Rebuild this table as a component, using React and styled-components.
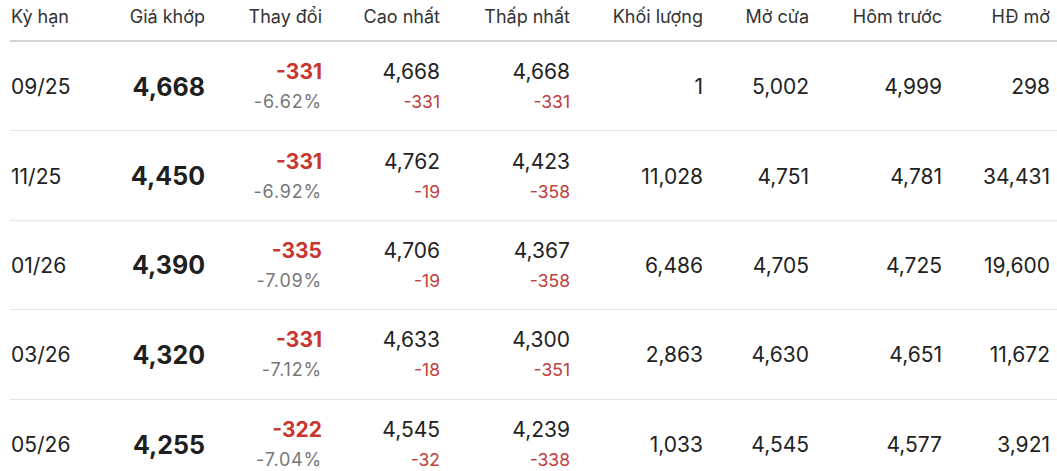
import { default as styled, createGlobalStyle } from "styled-components";

const rows = [
  { term: "09/25", price: "4,668", chg: "-331", pct: "-6.62%", high: "4,668", highChg: "-331", low: "4,668", lowChg: "-331", vol: "1", open: "5,002", prev: "4,999", oi: "298" },
  { term: "11/25", price: "4,450", chg: "-331", pct: "-6.92%", high: "4,762", highChg: "-19", low: "4,423", lowChg: "-358", vol: "11,028", open: "4,751", prev: "4,781", oi: "34,431" },
  { term: "01/26", price: "4,390", chg: "-335", pct: "-7.09%", high: "4,706", highChg: "-19", low: "4,367", lowChg: "-358", vol: "6,486", open: "4,705", prev: "4,725", oi: "19,600" },
  { term: "03/26", price: "4,320", chg: "-331", pct: "-7.12%", high: "4,633", highChg: "-18", low: "4,300", lowChg: "-351", vol: "2,863", open: "4,630", prev: "4,651", oi: "11,672" },
  { term: "05/26", price: "4,255", chg: "-322", pct: "-7.04%", high: "4,545", highChg: "-32", low: "4,239", lowChg: "-338", vol: "1,033", open: "4,545", prev: "4,577", oi: "3,921" },
];

const headers = ["Kỳ hạn", "Giá khớp", "Thay đổi", "Cao nhất", "Thấp nhất", "Khối lượng", "Mở cửa", "Hôm trước", "HĐ mở"];

const App = () => {
  return (
    <>
      <GlobalStyle />
      <Wrapper>
        <HeadRow>
          {headers.map((h, i) => (
            <HeadCell key={h} $left={i === 0}>{h}</HeadCell>
          ))}
        </HeadRow>
        {rows.map((r, i) => (
          <Row key={r.term} $last={i === rows.length - 1}>
            <Cell $left>{r.term}</Cell>
            <Cell><Price>{r.price}</Price></Cell>
            <Cell>
              <Stack>
                <Change>{r.chg}</Change>
                <Percent>{r.pct}</Percent>
              </Stack>
            </Cell>
            <Cell>
              <Stack>
                <span>{r.high}</span>
                <Sub>{r.highChg}</Sub>
              </Stack>
            </Cell>
            <Cell>
              <Stack>
                <span>{r.low}</span>
                <Sub>{r.lowChg}</Sub>
              </Stack>
            </Cell>
            <Cell>{r.vol}</Cell>
            <Cell>{r.open}</Cell>
            <Cell>{r.prev}</Cell>
            <Cell>{r.oi}</Cell>
          </Row>
        ))}
      </Wrapper>
    </>
  );
};

const GlobalStyle = createGlobalStyle`
  body {
    margin: 0;
    background: #fff;
    font-family: Inter, "Noto Sans", sans-serif;
    color: #222;
    overflow: hidden;
  }
`;

const Wrapper = styled.div`
  padding-left: 10px;
  width: 1047px;
`;

const columns = "90px 105px 117px 118px 130px 133px 106px 133px 115px";

const HeadRow = styled.div`
  display: grid;
  grid-template-columns: ${columns};
  height: 42px;
  align-items: center;
  padding-bottom: 8px;
  box-sizing: border-box;
  border-bottom: 2px solid #d4d4d4;
`;

const HeadCell = styled.div`
  font-size: 18px;
  color: #333;
  text-align: ${(p) => (p.$left ? "left" : "right")};
  padding-left: ${(p) => (p.$left ? "1px" : "0")};
  white-space: nowrap;
  &:last-child {
    padding-right: 7px;
  }
`;

const Row = styled.div`
  display: grid;
  grid-template-columns: ${columns};
  height: 89.4px;
  box-sizing: border-box;
  align-items: center;
  border-bottom: ${(p) => (p.$last ? "none" : "1px solid #e6e6e6")};
  font-size: 21px;
  color: #222;
`;

const Cell = styled.div`
  text-align: ${(p) => (p.$left ? "left" : "right")};
  padding-left: ${(p) => (p.$left ? "1px" : "0")};
  white-space: nowrap;
  padding-top: 1px;
  &:last-child {
    padding-right: 7px;
  }
`;

const Price = styled.span`
  font-size: 25px;
  font-weight: 700;
  color: #1f1f1f;
`;

const Stack = styled.div`
  display: flex;
  flex-direction: column;
  align-items: flex-end;
  gap: 7px;
  line-height: 24px;
`;

const Change = styled.span`
  font-weight: 700;
  color: #c8352e;
`;

const Percent = styled.span`
  font-size: 18px;
  color: #777;
  line-height: 22px;
  letter-spacing: 0.8px;
`;

const Sub = styled.span`
  font-size: 17.5px;
  color: #c0403c;
  line-height: 22px;
`;

export default App;
